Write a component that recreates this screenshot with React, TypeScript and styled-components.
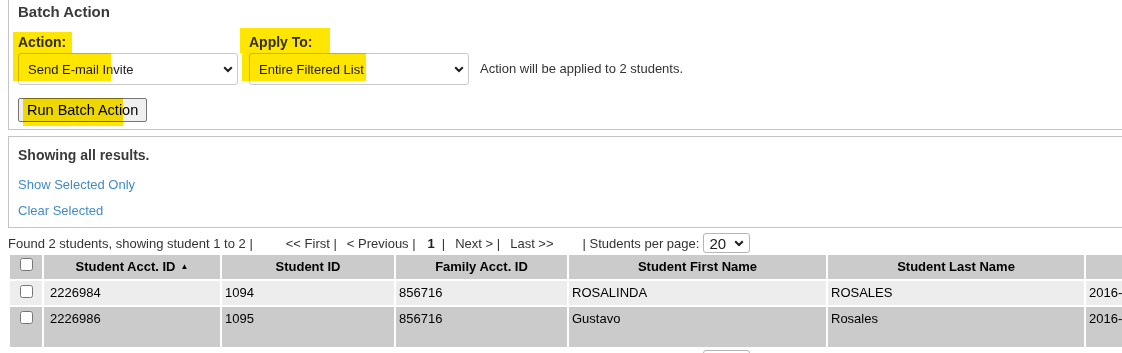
import React from 'react';
import styled, { createGlobalStyle } from 'styled-components';

const GlobalStyle = createGlobalStyle`
  html, body {
    margin: 0;
    padding: 0;
    overflow: hidden;
    background: #fff;
  }
  body {
    font-family: "Liberation Sans", Arial, sans-serif;
    font-size: 13px;
    color: #333;
  }
`;

const Page = styled.div`
  width: 1540px;
  padding: 0 8px;
`;

const Panel = styled.section<{ $first?: boolean }>`
  position: relative;
  border: 1px solid #c4c4c4;
  border-top: ${({ $first }) => ($first ? 'none' : '1px solid #c4c4c4')};
  margin-top: ${({ $first }) => ($first ? 0 : 6)}px;
  padding: ${({ $first }) => ($first ? '3px 9px 7px' : '10px 9px 9px')};
`;

const Heading = styled.h2<{ $size: number }>`
  margin: 0;
  font-size: ${({ $size }) => $size}px;
  line-height: ${({ $size }) => $size + 2}px;
  font-weight: bold;
  color: #3a3a3a;
`;

const FieldRow = styled.div`
  display: flex;
  align-items: flex-end;
  gap: 11px;
  margin-top: 14px;
`;

const Field = styled.label`
  display: flex;
  flex-direction: column;
`;

const Label = styled.span`
  font-size: 14px;
  line-height: 16px;
  font-weight: bold;
  color: #333;
  margin-bottom: 3px;
`;

const SelectWrap = styled.span<{ $w: number; $h: number }>`
  position: relative;
  display: inline-block;
  width: ${({ $w }) => $w}px;
  height: ${({ $h }) => $h}px;
`;

const Select = styled.select<{ $size: number; $pad: number; $edge: string }>`
  appearance: none;
  -webkit-appearance: none;
  width: 100%;
  height: 100%;
  box-sizing: border-box;
  margin: 0;
  padding: 0 0 0 ${({ $pad }) => $pad}px;
  border: 1px solid ${({ $edge }) => $edge};
  border-radius: 3px;
  background: #fff;
  font-family: "Liberation Sans", Arial, sans-serif;
  font-size: ${({ $size }) => $size}px;
  color: #222;
  outline: none;
`;

const Chevron = styled.svg<{ $right: number }>`
  position: absolute;
  right: ${({ $right }) => $right}px;
  top: 50%;
  margin-top: -3px;
  pointer-events: none;
`;

const Note = styled.span`
  line-height: 32px;
  color: #333;
`;

const RunButton = styled.button`
  display: block;
  margin-top: 13px;
  height: 24px;
  padding: 0 8px;
  border: 1px solid #767676;
  border-radius: 2px;
  background: #efefef;
  font-family: "Liberation Sans", Arial, sans-serif;
  font-size: 14.5px;
  color: #000;
`;

const Link = styled.a<{ $top: number }>`
  display: block;
  width: fit-content;
  margin-top: ${({ $top }) => $top}px;
  line-height: 15px;
  color: #428bca;
  text-decoration: none;
  cursor: pointer;
`;

const Marker = styled.span`
  position: absolute;
  background: #ffe600;
  mix-blend-mode: multiply;
  pointer-events: none;
`;

const PagerRow = styled.div<{ $top: number }>`
  display: flex;
  align-items: center;
  padding-top: ${({ $top }) => $top}px;
  color: #333;
  white-space: nowrap;
`;

const Pager = styled.div`
  display: flex;
  gap: 10px;
  margin-left: 33px;
`;

const Current = styled.b`
  color: #222;
  margin: 0 -3px 0 2px;
`;

const PerPage = styled.span`
  display: flex;
  align-items: center;
  gap: 4px;
  margin-left: 29px;
`;

const Table = styled.table`
  table-layout: fixed;
  width: 1522px;
  border-collapse: separate;
  border-spacing: 2px;
  font-size: 13px;
  color: #000;
`;

const Col = styled.col<{ $w: number }>`
  width: ${({ $w }) => $w}px;
`;

const Th = styled.th<{ $box?: boolean }>`
  height: 24px;
  box-sizing: border-box;
  padding: ${({ $box }) => ($box ? '3px 0 0' : '0 4px')};
  background: #cbcbcb;
  font-weight: bold;
  line-height: 16px;
  text-align: center;
  vertical-align: ${({ $box }) => ($box ? 'top' : 'middle')};
  white-space: nowrap;
  overflow: hidden;
`;

const SortArrow = styled.span`
  font-size: 8px;
  margin-left: 5px;
  vertical-align: 2px;
`;

const Tr = styled.tr<{ $shade: string }>`
  background: ${({ $shade }) => $shade};
`;

const Td = styled.td<{ $box?: boolean; $indent?: number }>`
  padding: ${({ $box, $indent = 3 }) => ($box ? '4px 0' : `4px 3px 4px ${$indent}px`)};
  line-height: 16px;
  vertical-align: top;
  text-align: ${({ $box }) => ($box ? 'center' : 'left')};
  overflow: hidden;
`;

const Check = styled.input`
  display: block;
  width: 13px;
  height: 13px;
  margin: 0 auto;
`;

const ChevronIcon = ({ right }: { right: number }) => (
  <Chevron $right={right} width="10" height="7" viewBox="0 0 10 7">
    <path d="M1.2 1.2 L5 5 L8.8 1.2" fill="none" stroke="#1e1e1e" strokeWidth="2" />
  </Chevron>
);

const PerPageSelect = () => (
  <SelectWrap $w={47} $h={20}>
    <Select $size={15} $pad={5} $edge="#b5b5b5" defaultValue="20">
      <option>10</option>
      <option>20</option>
      <option>50</option>
    </Select>
    <ChevronIcon right={6} />
  </SelectWrap>
);

const PagerLine = ({ top }: { top: number }) => (
  <PagerRow $top={top}>
    <span>Found 2 students, showing student 1 to 2 |</span>
    <Pager>
      <span>&lt;&lt; First |</span>
      <span>&lt; Previous |</span>
      <Current>1</Current>
      <span>|</span>
      <span>Next &gt; |</span>
      <span>Last &gt;&gt;</span>
    </Pager>
    <PerPage>
      | Students per page:
      <PerPageSelect />
    </PerPage>
  </PagerRow>
);

const students = [
  {
    acct: '2226984', id: '1094', family: '856716', first: 'ROSALINDA', last: 'ROSALES',
    created: '2016-08-22', email: 'rrosales@example.org', shade: '#ededed',
  },
  {
    acct: '2226986', id: '1095', family: '856716', first: 'Gustavo', last: 'Rosales',
    created: '2016-08-22', email: 'gustavo.rosales@example.org (no login yet)', shade: '#cbcbcb',
  },
];

const widths = [32, 176, 172, 171, 257, 256, 200, 240];

export default function App() {
  return (
    <Page>
      <GlobalStyle />
      <Panel $first>
        <Heading $size={15}>Batch Action</Heading>
        <FieldRow>
          <Field>
            <Label>Action:</Label>
            <SelectWrap $w={220} $h={32}>
              <Select $size={13} $pad={9} $edge="#c9c9c9" defaultValue="invite">
                <option value="invite">Send E-mail Invite</option>
                <option value="remind">Send Reminder</option>
              </Select>
              <ChevronIcon right={5} />
            </SelectWrap>
          </Field>
          <Field>
            <Label>Apply To:</Label>
            <SelectWrap $w={220} $h={32}>
              <Select $size={13} $pad={9} $edge="#c9c9c9" defaultValue="all">
                <option value="all">Entire Filtered List</option>
                <option value="selected">Selected Only</option>
              </Select>
              <ChevronIcon right={5} />
            </SelectWrap>
          </Field>
          <Note>Action will be applied to 2 students.</Note>
        </FieldRow>
        <RunButton>Run Batch Action</RunButton>

        <Marker style={{ left: 4, top: 32, width: 59, height: 21 }} />
        <Marker style={{ left: 4, top: 53, width: 98, height: 28 }} />
        <Marker style={{ left: 231, top: 28, width: 90, height: 25 }} />
        <Marker style={{ left: 233, top: 53, width: 124, height: 28 }} />
        <Marker style={{ left: 14, top: 98, width: 100, height: 28 }} />
      </Panel>

      <Panel>
        <Heading $size={14}>Showing all results.</Heading>
        <Link $top={14}>Show Selected Only</Link>
        <Link $top={11}>Clear Selected</Link>
      </Panel>

      <PagerLine top={5} />

      <Table>
        <colgroup>
          {widths.map((w, i) => <Col key={i} $w={w} />)}
        </colgroup>
        <thead>
          <tr>
            <Th $box><Check type="checkbox" /></Th>
            <Th>Student Acct. ID<SortArrow>▲</SortArrow></Th>
            <Th>Student ID</Th>
            <Th>Family Acct. ID</Th>
            <Th>Student First Name</Th>
            <Th>Student Last Name</Th>
            <Th>Date Created</Th>
            <Th>E-mail</Th>
          </tr>
        </thead>
        <tbody>
          {students.map((s) => (
            <Tr key={s.acct} $shade={s.shade}>
              <Td $box><Check type="checkbox" /></Td>
              <Td $indent={6}>{s.acct}</Td>
              <Td>{s.id}</Td>
              <Td>{s.family}</Td>
              <Td>{s.first}</Td>
              <Td>{s.last}</Td>
              <Td>{s.created}</Td>
              <Td>{s.email}</Td>
            </Tr>
          ))}
        </tbody>
      </Table>

      <PagerLine top={1} />
    </Page>
  );
}
